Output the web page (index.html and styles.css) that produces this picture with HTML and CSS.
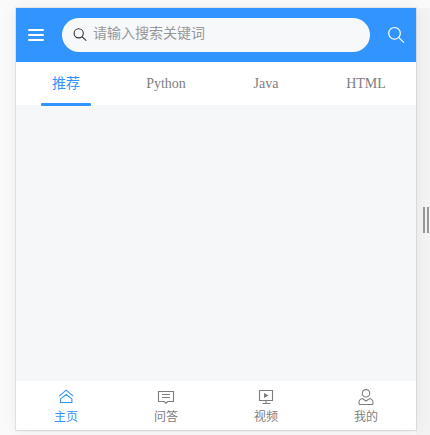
FILE: index.html
```
<!DOCTYPE html>
<html lang="zh">
<head>
<meta charset="utf-8">
<title>主页</title>
<link rel="stylesheet" href="styles.css">
</head>
<body>
<div class="stage">
  <div class="phone">
    <header class="header">
      <svg class="menu" viewBox="0 0 16 12"><path d="M1 1h14M1 6h14M1 11h14" stroke="#fff" stroke-width="2" stroke-linecap="round"/></svg>
      <div class="search">
        <svg class="glass" viewBox="0 0 14 14"><circle cx="5.7" cy="5.3" r="4.6"/><path d="M9 8.7l4.3 4"/></svg>
        <span>请输入搜索关键词</span>
      </div>
      <svg class="find" viewBox="0 0 18 18"><circle cx="7.5" cy="7.3" r="5.8"/><path d="M11.8 11.6l5.2 5"/></svg>
    </header>
    <nav class="tabs">
      <a class="tab active">推荐</a><a class="tab">Python</a><a class="tab">Java</a><a class="tab">HTML</a>
    </nav>
    <main class="content"></main>
    <nav class="tabbar">
      <a class="item active">
        <svg class="icon" viewBox="0 0 18 18"><path d="M2.2 8.2 9.2 2.2l7 6M3.5 14.5v-3.6l5.7-4.4 5.7 4.4v3.6z"/></svg>
        <span>主页</span></a>
      <a class="item">
        <svg class="icon" viewBox="0 0 18 18"><path d="M1.5 3.5h15v10h-5.7L9 15.2l-1.8-1.7H1.5zM5 6.5h8M5 9.5h8"/></svg>
        <span>问答</span></a>
      <a class="item">
        <svg class="icon" viewBox="0 0 18 18"><path d="M2.5 2.5h13v10h-13zM9 12.5v3M5.5 15.5h8"/><path class="solid" d="M7 5l4.5 2.6L7 10z"/></svg>
        <span>视频</span></a>
      <a class="item">
        <svg class="icon" viewBox="0 0 18 18"><circle cx="9" cy="5.3" r="3.7"/><path d="M5.3 10.5 9 13l3.7-2.5c2 .6 3.3 2 3.3 4v1q0 1-1 1H3q-1 0-1-1v-1c0-2 1.3-3.4 3.3-4z"/></svg>
        <span>我的</span></a>
    </nav>
  </div>
  <div class="resizer"><i></i><i></i></div>
</div>
</body>
</html>
```
FILE: styles.css
```
* { box-sizing: border-box; }
body {
  margin: 0;
  height: 435px;
  overflow: hidden;
  background: #fafafa;
  font-family: "Liberation Serif", "Noto Sans CJK SC", serif;
  color: #7d7e80;
}
svg { display: block; fill: none; overflow: visible; }
.stage { display: flex; height: 435px; padding: 8px 0 0 16px; }
.phone {
  position: relative;
  z-index: 1;
  display: flex;
  flex-direction: column;
  width: 400px;
  height: 422px;
  background: #fff;
  box-shadow: 0 0 0 1px rgba(0, 0, 0, .06), 0 1px 2px rgba(0, 0, 0, .08), 0 0 16px rgba(0, 0, 0, .06);
}
.header {
  display: flex;
  align-items: center;
  height: 54px;
  padding: 0 11px 0 12px;
  background: #3194ff;
}
.menu { width: 16px; height: 12px; }
.search {
  display: flex;
  align-items: center;
  width: 308px;
  height: 34px;
  margin: 0 17px 0 18px;
  padding-left: 11px;
  border-radius: 17px;
  background: #f7f8fa;
  font-size: 14px;
  line-height: 20px;
  color: #969799;
}
.search span { margin: -2px 0 0 6px; }
.glass { width: 14px; height: 14px; stroke: #323233; stroke-width: 1.1; }
.find { width: 18px; height: 18px; stroke: #fff; stroke-width: 1.2; }
.tabs { display: flex; height: 43px; }
.tab {
  position: relative;
  flex: 1;
  text-align: center;
  font-size: 14px;
  line-height: 44px;
}
.active { color: #3194ff; }
.tab.active::after {
  content: "";
  position: absolute;
  left: 25px;
  bottom: -1px;
  width: 50px;
  height: 3px;
  border-radius: 1px;
  background: #3194ff;
}
.content { flex: 1; background: #f6f7f9; }
.tabbar { display: flex; height: 49px; }
.item {
  display: flex;
  flex: 1;
  flex-direction: column;
  align-items: center;
  padding-top: 7px;
  font-size: 12px;
  line-height: 18px;
}
.icon { width: 18px; height: 18px; stroke: currentColor; stroke-width: 1.1; }
.item span { margin-top: 2px; }
.solid { fill: currentColor; stroke: none; }
.resizer {
  display: flex;
  flex: 1;
  gap: 2px;
  align-items: flex-start;
  padding: 199px 0 0 7px;
  background: #f3f3f3;
}
.resizer i { width: 2px; height: 26px; background: #999; }
```
